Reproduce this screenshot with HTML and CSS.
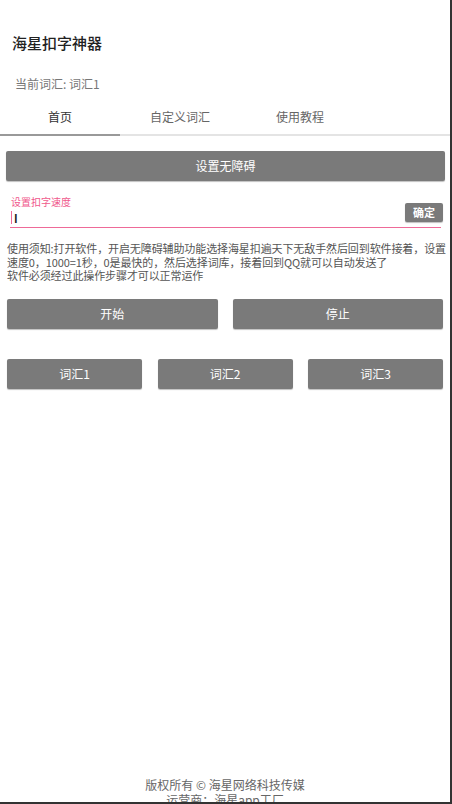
FILE: index.html
```html
<!DOCTYPE html>
<html lang="zh-CN">
<head>
<meta charset="utf-8">
<title>海星扣字神器</title>
<link rel="stylesheet" href="styles.css">
</head>
<body>
<div class="page">
  <header class="appbar">
    <h1 class="title">海星扣字神器</h1>
    <div class="subtitle">当前词汇: 词汇1</div>
  </header>
  <nav class="tabs">
    <div class="tab active">首页</div>
    <div class="tab">自定义词汇</div>
    <div class="tab">使用教程</div>
  </nav>
  <div class="tabline"><span class="indicator"></span></div>

  <main class="content">
    <div class="btn wide">设置无障碍</div>

    <div class="field">
      <div class="field-label">设置扣字速度</div>
      <div class="field-input"><span class="caret"></span><span class="value">I</span></div>
      <div class="btn small">确定</div>
    </div>

    <p class="notice">使用须知:打开软件，开启无障碍辅助功能选择海星扣遍天下无敌手然后回到软件接着，设置<br>速度0，1000=1秒，0是最快的，然后选择词库，接着回到QQ就可以自动发送了<br>软件必须经过此操作步骤才可以正常运作</p>

    <div class="row two">
      <div class="btn">开始</div>
      <div class="btn">停止</div>
    </div>

    <div class="row three">
      <div class="btn">词汇1</div>
      <div class="btn">词汇2</div>
      <div class="btn">词汇3</div>
    </div>
  </main>

  <footer class="footer">
    <div>版权所有 © 海星网络科技传媒</div>
    <div>运营商：海星app工厂</div>
  </footer>
</div>
</body>
</html>
```

FILE: styles.css
```css
* { box-sizing: border-box; }
html, body { margin: 0; padding: 0; background: #fff; }
body {
  font-family: "Noto Sans CJK SC", "Noto Sans", Roboto, sans-serif;
  color: #333;
}
.page {
  width: 452px;
  height: 804px;
  overflow: hidden;
  display: flex;
  flex-direction: column;
  position: relative;
  border-right: 2px solid #333;
  border-bottom: 2px solid #333;
}
.appbar { padding: 33px 0 0 12px; }
.title {
  margin: 0;
  font-size: 15px;
  line-height: 20px;
  font-weight: 500;
  color: #222;
}
.subtitle {
  margin: 23px 0 0 3px;
  font-size: 12px;
  line-height: 16px;
  color: #777;
}
.tabs {
  display: flex;
  margin-top: 8px;
  height: 34px;
}
.tab {
  width: 120px;
  text-align: center;
  font-size: 12px;
  line-height: 34px;
  color: #666;
}
.tab.active { color: #333; }
.tabline {
  height: 2px;
  background: #e4e4e4;
  display: flex;
}
.indicator {
  width: 120px;
  height: 2px;
  background: #999;
}
.content { display: flex; flex-direction: column; }
.btn {
  background: #7a7a7a;
  color: #fff;
  font-size: 12px;
  height: 30px;
  line-height: 30px;
  text-align: center;
  border-radius: 2px;
  box-shadow: 0 1px 1px rgba(0,0,0,0.25);
}
.btn.wide { margin: 15px 5px 0 6px; }
.field {
  position: relative;
  margin: 15px 9px 0 10px;
}
.field-label {
  font-size: 10px;
  line-height: 12px;
  color: #f0588c;
  padding-left: 1px;
}
.field-input {
  height: 20px;
  border-bottom: 1.5px solid #ee6a98;
  display: flex;
  align-items: center;
}
.caret {
  width: 1px;
  height: 13px;
  background: #ee6a98;
  margin-left: 1px;
}
.value {
  font-size: 11px;
  font-weight: 700;
  color: #222;
  margin-left: 2px;
}
.btn.small {
  position: absolute;
  right: -2px;
  top: 7px;
  width: 38px;
  height: 19px;
  line-height: 19px;
  font-size: 11px;
  font-weight: 700;
}
.notice {
  margin: 14px 2px 0 7px;
  font-size: 11px;
  line-height: 13.5px;
  letter-spacing: -0.1px;
  white-space: nowrap;
  color: #555;
}
.row { display: flex; margin: 0 7px 0 7px; }
.row.two { margin-top: 16px; gap: 15px; }
.row.two .btn { flex: 1; }
.row.three { margin-top: 30px; gap: 15.5px; }
.row.three .btn { flex: 1; }
.footer {
  margin-top: auto;
  margin-bottom: -5px;
  text-align: center;
  font-size: 12px;
  line-height: 15px;
  color: #666;
}
```
